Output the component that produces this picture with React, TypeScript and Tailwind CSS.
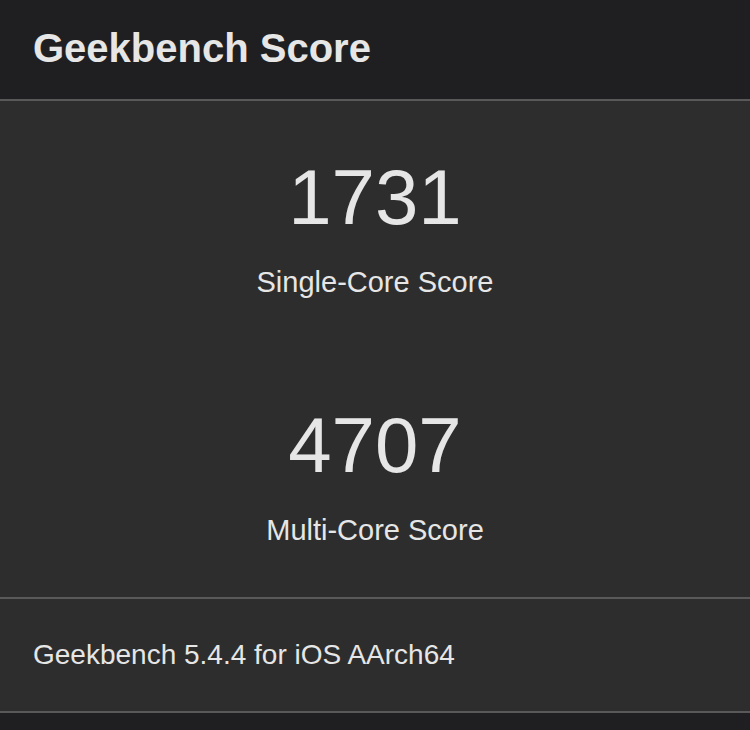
import React from 'react';

const scores = [
  { value: '1731', label: 'Single-Core Score' },
  { value: '4707', label: 'Multi-Core Score' },
];

const App: React.FC = () => {
  return (
    <div
      className="min-h-[730px] w-[750px] bg-[#1f1f21] text-[#e6e6e6]"
      style={{ fontFamily: '"Liberation Sans", Arial, sans-serif' }}
    >
      {/* Header */}
      <div className="h-[101px] border-b-2 border-[#595959] px-[33px] flex items-center">
        <h1 className="text-[40px] font-bold leading-none pb-[4px]">Geekbench Score</h1>
      </div>

      {/* Scores */}
      <div className="h-[498px] bg-[#2d2d2d] border-b-2 border-[#595959] flex flex-col items-center pt-[57px]">
        {scores.map((s, i) => (
          <div key={s.value} className={`flex flex-col items-center ${i > 0 ? 'mt-[109px]' : ''}`}>
            <div className="text-[78px] leading-none font-normal">{s.value}</div>
            <div className="text-[29px] leading-none font-medium mt-[32px]">{s.label}</div>
          </div>
        ))}
      </div>

      {/* Footer */}
      <div className="h-[114px] bg-[#2d2d2d] border-b-2 border-[#595959] px-[33px] flex items-center">
        <p className="text-[28px] leading-none">Geekbench 5.4.4 for iOS AArch64</p>
      </div>
    </div>
  );
};

export default App;
